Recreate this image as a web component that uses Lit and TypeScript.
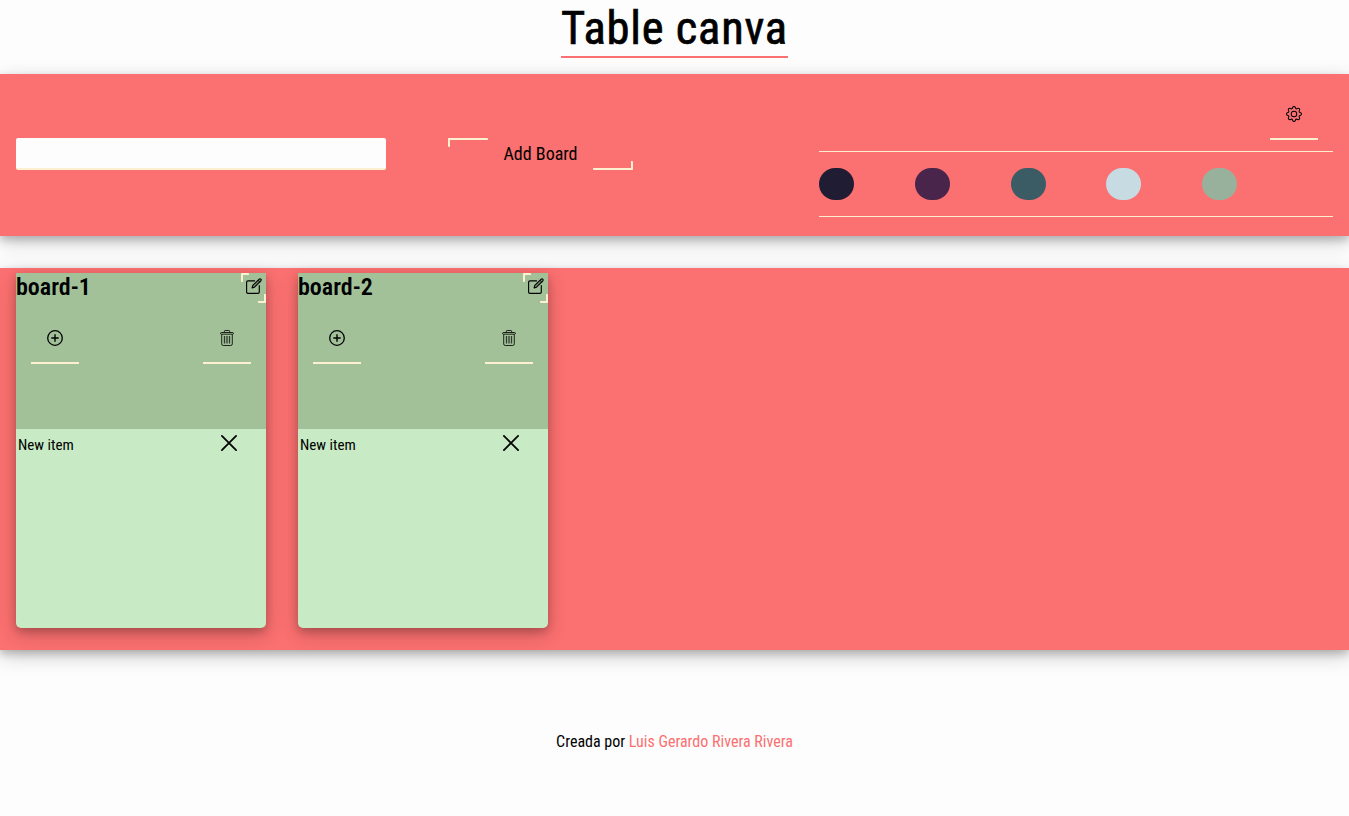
import { LitElement, html, css, svg } from "lit";
import { customElement, property } from "lit/decorators.js";

const font = css`"Roboto Condensed", Roboto, "Liberation Sans Narrow", sans-serif`;
const lift = css`0 4px 8px 0 rgba(0, 0, 0, 0.2), 0 6px 20px 0 rgba(0, 0, 0, 0.19)`;

const gear = svg`<g><path d="M8 4.754a3.246 3.246 0 1 0 0 6.492 3.246 3.246 0 0 0 0-6.492zM5.754 8a2.246 2.246 0 1 1 4.492 0 2.246 2.246 0 0 1-4.492 0z"/><path d="M9.796 1.343c-.527-1.79-3.065-1.79-3.592 0l-.094.319a.873.873 0 0 1-1.255.52l-.292-.16c-1.64-.892-3.433.902-2.54 2.541l.159.292a.873.873 0 0 1-.52 1.255l-.319.094c-1.79.527-1.79 3.065 0 3.592l.319.094a.873.873 0 0 1 .52 1.255l-.16.292c-.892 1.64.901 3.434 2.541 2.54l.292-.159a.873.873 0 0 1 1.255.52l.094.319c.527 1.79 3.065 1.79 3.592 0l.094-.319a.873.873 0 0 1 1.255-.52l.292.16c1.64.893 3.434-.902 2.54-2.541l-.159-.292a.873.873 0 0 1 .52-1.255l.319-.094c1.79-.527 1.79-3.065 0-3.592l-.319-.094a.873.873 0 0 1-.52-1.255l.16-.292c.893-1.64-.902-3.433-2.541-2.54l-.292.159a.873.873 0 0 1-1.255-.52l-.094-.319zm-2.633.283c.246-.835 1.428-.835 1.674 0l.094.319a1.873 1.873 0 0 0 2.693 1.115l.291-.16c.764-.415 1.6.42 1.184 1.185l-.159.292a1.873 1.873 0 0 0 1.116 2.692l.318.094c.835.246.835 1.428 0 1.674l-.319.094a1.873 1.873 0 0 0-1.115 2.693l.16.291c.415.764-.42 1.6-1.185 1.184l-.291-.159a1.873 1.873 0 0 0-2.693 1.116l-.094.318c-.246.835-1.428.835-1.674 0l-.094-.319a1.873 1.873 0 0 0-2.692-1.115l-.292.16c-.764.415-1.6-.42-1.184-1.185l.159-.291A1.873 1.873 0 0 0 1.945 8.93l-.319-.094c-.835-.246-.835-1.428 0-1.674l.319-.094A1.873 1.873 0 0 0 3.06 4.377l-.16-.292c-.415-.764.42-1.6 1.185-1.184l.292.159a1.873 1.873 0 0 0 2.692-1.115l.094-.319z"/></g>`;
const plusCircle = svg`<g fill="none" stroke="#000" stroke-width="1.3"><circle cx="8" cy="8" r="7.3"/><path d="M8 4.8v6.4M4.8 8h6.4" stroke-width="1.4" stroke-linecap="round"/></g>`;
const trash = svg`<g fill="none" stroke="#000" stroke-opacity=".82"><path d="M5.4 2.4V1.3q0-.8.8-.8h3.6q.8 0 .8.8v1.1"/><rect x="1.6" y="2.5" width="12.8" height="1.7" rx=".8"/><path d="M2.7 4.4v9.5q0 1.6 1.6 1.6h7.4q1.6 0 1.6-1.6V4.4"/><path d="M5.5 6v7.6M8 6v7.6M10.5 6v7.6" stroke-opacity=".7" stroke-width="1.3"/></g>`;
const pencil = svg`<g fill="none" stroke="#000" stroke-linejoin="round" stroke-linecap="round"><path d="M8.6 2.8H2q-1.4 0-1.4 1.4v9.8q0 1.4 1.4 1.4h9.9q1.4 0 1.4-1.4V7.6" stroke-width="1.15"/><path d="M6.1 9.9l.7-2.5 6.4-6.3q.8-.7 1.6 0t0 1.7L8.5 9.2z" stroke-width="1.15" fill="#000" fill-opacity=".25"/><path d="M12 2.3l1.8 1.8" stroke-width=".8"/></g>`;
const cross = svg`<path d="M.9.9 15.1 15.1M15.1.9.9 15.1" fill="none" stroke="#000" stroke-width="1.8" stroke-linecap="round"/>`;
const icon = (shape: unknown) => html`<svg viewBox="0 0 16 16" width="16" height="16">${shape}</svg>`;

@customElement("board-card")
class BoardCard extends LitElement {
  @property() name = "";
  @property({ attribute: false }) items: string[] = [];

  static styles = css`
    :host {
      display: flex;
      flex-direction: column;
      width: 250px;
      height: 355px;
      border-radius: 0 0 5px 5px;
      background: #c8ebc5;
      box-shadow: ${lift};
      font-family: ${font};
      font-stretch: 75%;
    }
    svg { display: block; overflow: visible; }
    .head { height: 156px; background: #a2c198; }
    .title-row { display: flex; justify-content: space-between; height: 30px; }
    .name { margin: 0; font-size: 24px; line-height: 28px; font-weight: 600; }
    .edit {
      position: relative;
      width: 25px;
      height: 30px;
      box-sizing: border-box;
      padding: 5px 0 0 5px;
    }
    .edit::before, .edit::after {
      content: "";
      position: absolute;
      width: 6px;
      height: 7px;
      border: 0 solid #fdf0d0;
      border-radius: 1px;
    }
    .edit::before { left: 0; top: 0; border-width: 2px 0 0 2px; }
    .edit::after { right: 0; bottom: 0; border-width: 0 2px 2px 0; }
    .tools { display: flex; justify-content: space-between; padding: 19px 15px 0; }
    .tool {
      display: flex;
      justify-content: center;
      box-sizing: border-box;
      width: 48px;
      height: 42px;
      padding-top: 8px;
      border-bottom: 2px solid #fdf0d0;
    }
    .item { display: flex; justify-content: space-between; padding: 6px 29px 0 2px; font-size: 15px; line-height: 20px; }
  `;

  render() {
    return html`
      <div class="head">
        <div class="title-row">
          <h2 class="name">${this.name}</h2>
          <div class="edit">${icon(pencil)}</div>
        </div>
        <div class="tools">
          <div class="tool">${icon(plusCircle)}</div>
          <div class="tool">${icon(trash)}</div>
        </div>
      </div>
      ${this.items.map((t) => html`<div class="item"><span>${t}</span>${icon(cross)}</div>`)}
    `;
  }
}

@customElement("app-root")
class AppRoot extends LitElement {
  static styles = css`
    :host {
      display: block;
      height: 816px;
      overflow: hidden;
      background: #fdfdfd;
      color: #000;
      font-family: ${font};
      font-stretch: 75%;
    }
    svg { display: block; }
    .top { display: flex; justify-content: center; height: 74px; }
    .title {
      box-sizing: border-box;
      margin: 0;
      height: 58px;
      font-size: 46.5px;
      line-height: 56px;
      font-weight: 400;
      letter-spacing: 0.8px;
      -webkit-text-stroke: 0.7px #000;
      border-bottom: 2px solid #fb7070;
    }
    .bar, .boards {
      box-sizing: border-box;
      display: flex;
      background: #fb7070;
      box-shadow: ${lift};
    }
    .bar { height: 162px; padding: 0 16px; align-items: center; }
    .field {
      box-sizing: border-box;
      width: 370px;
      height: 32px;
      margin: 0 62px 2px 0;
      border: 0;
      border-bottom: 2px solid #fdf0d0;
      border-radius: 2px;
      background: #fdfdfd;
      outline: none;
    }
    .add {
      position: relative;
      width: 185px;
      height: 32px;
      margin-bottom: 2px;
      text-align: center;
      font-size: 18px;
      line-height: 32px;
    }
    .add::before, .add::after {
      content: "";
      position: absolute;
      box-sizing: border-box;
      width: 40px;
      height: 9px;
      border: 0 solid #fdf0d0;
      border-radius: 1px;
    }
    .add::before { left: 0; top: 0; border-width: 2px 0 0 2px; }
    .add::after { right: 0; bottom: 0; border-width: 0 2px 2px 0; }
    .settings { width: 514px; margin-left: auto; align-self: flex-start; }
    .gear {
      display: flex;
      justify-content: center;
      box-sizing: border-box;
      width: 48px;
      height: 42px;
      margin: 24px 15px 11px auto;
      padding-top: 8px;
      border-bottom: 2px solid #fdf0d0;
    }
    .colors {
      display: grid;
      grid-template-columns: repeat(5, 35px);
      column-gap: 60.8px;
      padding: 16px 0;
      border: 1px solid #fdf0d0;
      border-width: 1px 0;
    }
    .swatch { height: 32px; border-radius: 16px; }
    .boards { height: 382px; margin-top: 32px; padding: 5px 16px 0; gap: 32px; }
    .foot { padding-top: 82px; text-align: center; font-size: 16px; line-height: 20px; }
    .author { color: #fb7070; }
  `;

  colors = ["#1f1c34", "#49254b", "#3b5c64", "#c7dbe3", "#98b19d"];
  boards = [
    { name: "board-1", items: ["New item"] },
    { name: "board-2", items: ["New item"] },
  ];

  render() {
    return html`
      <header class="top"><h1 class="title">Table canva</h1></header>
      <section class="bar">
        <input class="field" />
        <div class="add">Add Board</div>
        <div class="settings">
          <div class="gear">${icon(gear)}</div>
          <div class="colors">${this.colors.map((c) => html`<div class="swatch" style="background:${c}"></div>`)}</div>
        </div>
      </section>
      <main class="boards">
        ${this.boards.map((b) => html`<board-card .name=${b.name} .items=${b.items}></board-card>`)}
      </main>
      <footer class="foot">Creada por <span class="author">Luis Gerardo Rivera Rivera</span></footer>
    `;
  }
}
